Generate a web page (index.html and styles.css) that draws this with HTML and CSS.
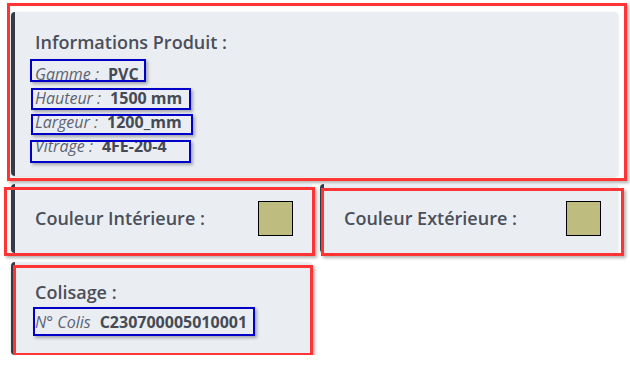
FILE: index.html
```html
<!doctype html>
<html lang="fr">
    <head>
        <meta charset="utf-8">
        <meta name="viewport" content="width=device-width, initial-scale=1">
        <title>Fiche produit</title>
        <link rel="stylesheet" href="styles.css">
    </head>
    <body>
        <div class="sheet">
            <div class="card card-info mark-red">
                <h3 class="card-title">Informations Produit :</h3>
                <div class="field mark-blue field-gamme">
                    <span class="field-label">Gamme :</span><span class="field-value">PVC</span>
                </div>
                <div class="field mark-blue field-hauteur">
                    <span class="field-label">Hauteur :</span><span class="field-value">1500 mm</span>
                </div>
                <div class="field mark-blue field-largeur">
                    <span class="field-label">Largeur :</span><span class="field-value">1200_mm</span>
                </div>
                <div class="field mark-blue field-vitrage">
                    <span class="field-label">Vitrage :</span><span class="field-value">4FE-20-4</span>
                </div>
            </div>
            <div class="card card-color card-int mark-red">
                <h3 class="card-title">Couleur Intérieure :</h3>
                <span class="swatch"></span>
            </div>
            <div class="card card-color card-ext mark-red">
                <h3 class="card-title">Couleur Extérieure :</h3>
                <span class="swatch"></span>
            </div>
            <div class="card card-colis mark-red">
                <h3 class="card-title">Colisage :</h3>
                <div class="field field-colis mark-blue">
                    <span class="field-label">N° Colis</span><span class="field-value">C230700005010001</span>
                </div>
            </div>
        </div>
    </body>
</html>
```
FILE: styles.css
```css
html {
    font-family: "Open Sans", "DejaVu Sans", sans-serif;
    color: #4a4f5a;
}
body {
    margin: 0;
    background: #fff;
}
.sheet {
    display: grid;
    grid-template-columns: 301px 298px;
    column-gap: 8px;
    row-gap: 8px;
    width: 607px;
    padding: 12px 0 0 11px;
}
.card {
    position: relative;
    background-color: #eaeef3;
    border-left: 4px solid #343a46;
    border-radius: 4px;
    box-shadow: 0 1px 3px rgba(0, 0, 0, 0.15);
    padding: 17px 18px 18px 20px;
    box-sizing: border-box;
}
.card-title {
    font-size: 18px;
    font-weight: 600;
    line-height: 27px;
    margin: 0;
    color: #4a4f5a;
}
.card-info {
    grid-column: 1 / 3;
    height: 164px;
}
.card-info .card-title {
    margin-bottom: 6px;
}
.card-color {
    display: flex;
    align-items: center;
    justify-content: space-between;
    height: 69px;
    padding-top: 0;
    padding-bottom: 0;
}
.card-colis {
    height: 93px;
    margin-top: 1px;
}
.card-colis .card-title {
    margin-bottom: 2px;
}
.field {
    position: relative;
    font-size: 16px;
    line-height: 24px;
}
.field-colis {
    line-height: 28px;
}
.field-label {
    font-style: italic;
    font-weight: 400;
    color: #5d6370;
}
.field-value {
    font-weight: 700;
    color: #454a55;
    margin-left: 9px;
}
.swatch {
    width: 35px;
    height: 35px;
    box-sizing: border-box;
    border: 1.5px solid #000;
    background-color: #bfbc80;
}
.card-int .swatch {
    margin-right: 1px;
}
.card-ext .swatch {
    margin-right: -1px;
}

/* annotation outlines */
.mark-red::after,
.mark-blue::after {
    content: "";
    position: absolute;
    box-sizing: border-box;
    pointer-events: none;
}
.mark-red::after {
    border: 3px solid #ff3535;
    box-shadow: 2px 2px 3px rgba(0, 0, 0, 0.3);
}
.mark-blue::after {
    border: 2px solid #0000c8;
    box-shadow: 2px 2px 3px rgba(0, 0, 0, 0.3);
}
.card-info::after {
    left: -8px;
    top: -9px;
    right: -9px;
    bottom: -5px;
}
.card-int::after {
    left: -11px;
    top: 3px;
    right: -3px;
    bottom: -3px;
}
.card-ext::after {
    left: -3px;
    top: 4px;
    right: -6px;
    bottom: -3px;
}
.card-colis::after {
    left: -2px;
    top: 3px;
    right: -1px;
    bottom: -1px;
}
.field-gamme::after {
    left: -5px;
    top: -3px;
    width: 116px;
    height: 23px;
}
.field-hauteur::after {
    left: -4px;
    top: 2px;
    width: 160px;
    height: 22px;
}
.field-largeur::after {
    left: -4px;
    top: 4px;
    width: 162px;
    height: 21px;
}
.field-vitrage::after {
    left: -5px;
    top: 6px;
    width: 161px;
    height: 23px;
}
.field-colis::after {
    left: -2px;
    top: -1px;
    width: 222px;
    height: 29px;
}
```
